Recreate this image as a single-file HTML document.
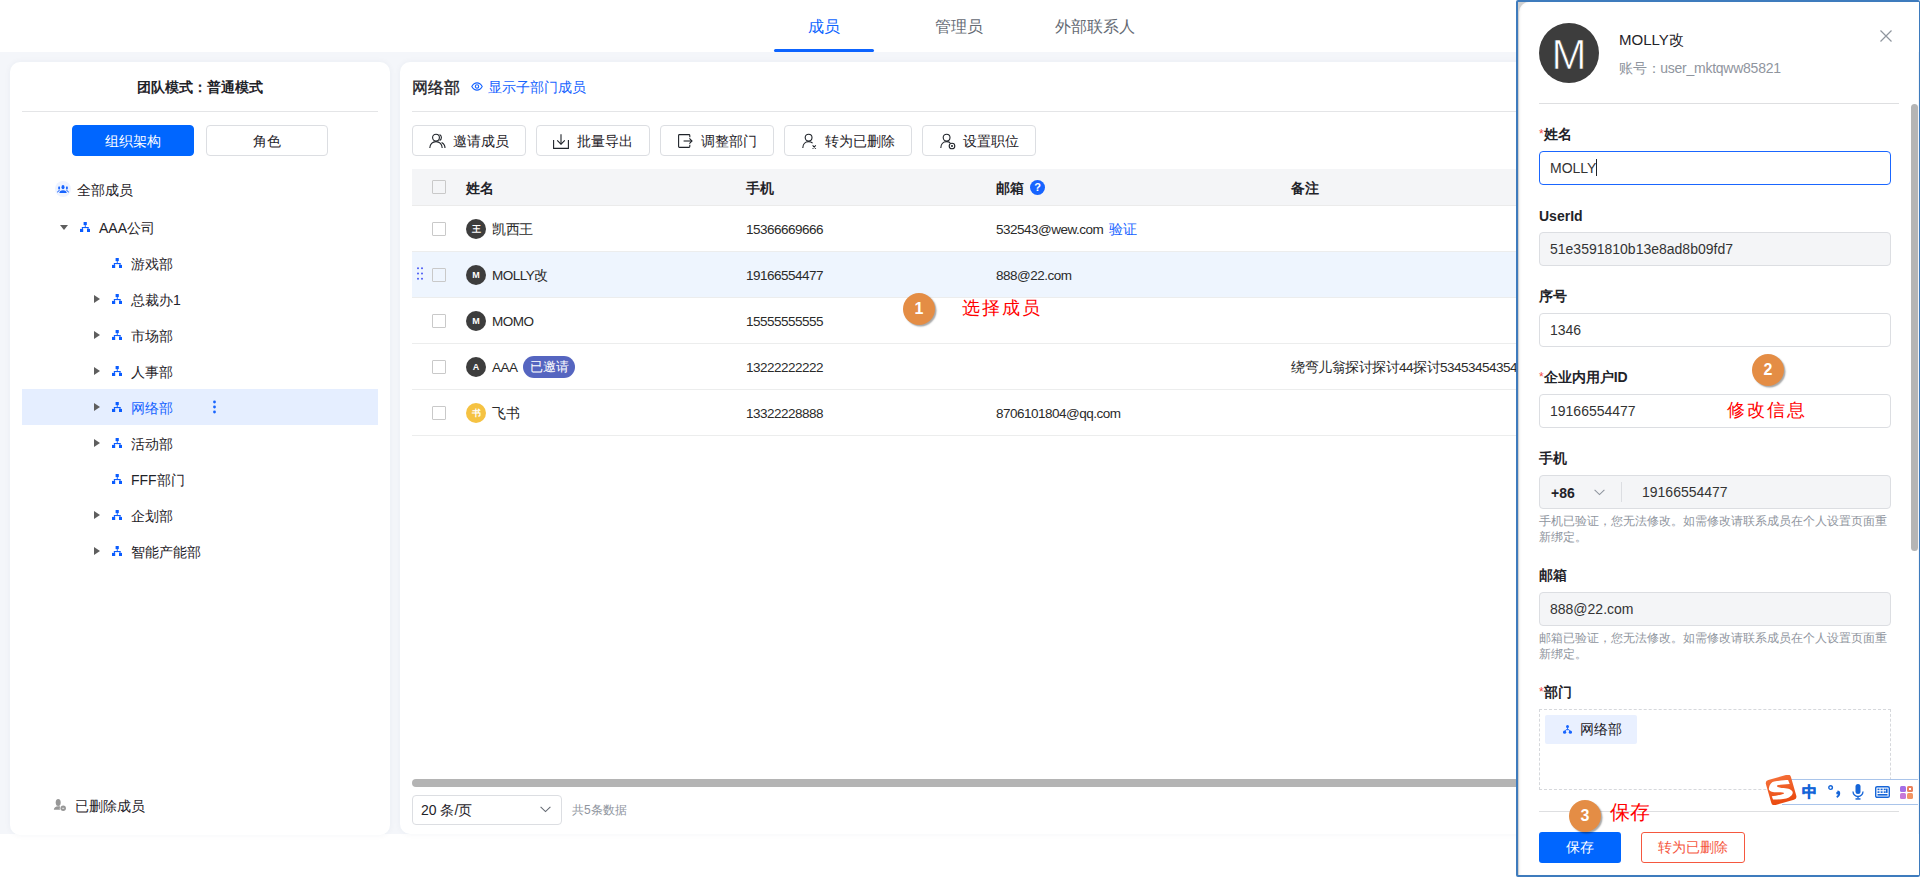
<!DOCTYPE html>
<html><head><meta charset="utf-8">
<style>
*{box-sizing:border-box;margin:0;padding:0}
html,body{width:1920px;height:880px;overflow:hidden;background:#fff;font-family:"Liberation Sans",sans-serif;font-size:14px;color:#1f2329}
.a{position:absolute;white-space:nowrap}
#bg{position:absolute;left:0;top:52px;width:1920px;height:782px;background:#f4f6fa}
.card{position:absolute;background:#fff;border-radius:10px;box-shadow:0 0 6px rgba(40,50,90,.05)}
.tab{position:absolute;top:17px;font-size:16px;line-height:20px;color:#646a73}
.btn{position:absolute;height:31px;border:1px solid #dcdee2;border-radius:4px;background:#fff;line-height:30px;text-align:center;font-size:14px;color:#1f2329}
.tree{position:absolute;height:36px;line-height:38px;font-size:14px;color:#1f2329}
.org{position:absolute;width:10px;height:10px}
.caret{position:absolute;width:0;height:0}
.cb{position:absolute;width:14px;height:14px;border:1.5px solid #c9c9c9;border-radius:1px}
.th{position:absolute;top:179px;font-size:14px;line-height:18px;font-weight:bold;color:#1f2329}
.td{position:absolute;font-size:13.5px;letter-spacing:-.5px;line-height:18px;color:#2a2a2a;white-space:nowrap}
.av{position:absolute;width:20px;height:20px;border-radius:50%;color:#fff;font-size:9px;font-weight:bold;line-height:20px;text-align:center}
.lb{position:absolute;left:1539px;font-size:14px;line-height:18px;font-weight:bold;color:#1f2329}
.req{color:#f54a45;font-weight:normal;font-size:12px;vertical-align:1px}
.inp{position:absolute;left:1539px;width:352px;height:34px;border:1px solid #dcdee2;border-radius:4px;padding-left:10px;font-size:14px;line-height:32px;color:#333}
.dis{background:#f4f5f7;color:#333}
.hint{position:absolute;left:1539px;font-size:12px;line-height:16px;color:#8f959e}
.num{position:absolute;width:32px;height:32px;border-radius:50%;background:#e48d45;color:#fff;font-weight:bold;font-size:16px;line-height:32px;text-align:center;box-shadow:1.5px 1.5px 1.5px rgba(0,0,0,.35)}
.anno{position:absolute;font-size:18px;line-height:22px;color:#f00;letter-spacing:2px;white-space:nowrap}
</style></head><body>
<svg width="0" height="0" style="position:absolute"><defs>
<symbol id="i-org" viewBox="0 0 10 10"><g fill="#0a5cff"><rect x="3.6" y="0" width="3.2" height="3.1"/><rect x="4.8" y="3" width=".9" height="2.2"/><rect x="1.9" y="5" width="6.6" height="1.1"/><rect x="1.9" y="5" width="1" height="2"/><rect x="7.5" y="5" width="1" height="2"/><rect x="0" y="6.9" width="3.2" height="3.1"/><rect x="7" y="6.9" width="3.1" height="3.1"/></g></symbol>
</defs></svg>
<!-- header tabs -->
<div class="tab" style="left:808px;color:#0d64ff">成员</div>
<div style="position:absolute;left:774px;top:49px;width:100px;height:3px;background:#0d64ff;border-radius:2px"></div>
<div class="tab" style="left:935px">管理员</div>
<div class="tab" style="left:1055px">外部联系人</div>
<div id="bg"></div>

<!-- left card -->
<div class="card" style="left:10px;top:62px;width:380px;height:773px"></div>
<div class="a" style="left:0;top:78px;width:400px;text-align:center;font-weight:bold;font-size:14px;line-height:18px">团队模式：普通模式</div>
<div class="a" style="left:22px;top:111px;width:356px;height:1px;background:#e4e5e7"></div>
<div class="btn" style="left:72px;top:125px;width:122px;background:#0066ff;border-color:#0066ff;color:#fff">组织架构</div>
<div class="btn" style="left:206px;top:125px;width:122px">角色</div>


<div class="a" style="left:55px;top:181px;width:16px;height:16px;border-radius:50%;background:#eef3ff"></div>
<svg class="a" style="left:57px;top:185px" width="12" height="8" viewBox="0 0 12 8"><g fill="#1764ff"><ellipse cx="6" cy="2.2" rx="1.5" ry="2.1"/><path d="M2.3 8Q2.5 5.2 6 5.2T9.7 8z"/><ellipse cx="2.1" cy="2.9" rx=".95" ry="1.7"/><ellipse cx="9.9" cy="2.9" rx=".95" ry="1.7"/></g><path d="M.5 7.4Q1 5.6 2.6 5.3M11.5 7.4Q11 5.6 9.4 5.3" fill="none" stroke="#1764ff" stroke-width="1"/></svg>
<div class="tree" style="left:77px;top:171px">全部成员</div>
<div class="caret" style="left:60px;top:225px;border-left:4.6px solid transparent;border-right:4.6px solid transparent;border-top:5px solid #5e5e5e"></div>
<svg class="org" style="left:80px;top:222px" viewBox="0 0 10 10"><use href="#i-org"/></svg>
<div class="tree" style="left:99px;top:209px">AAA公司</div>
<svg class="org" style="left:112px;top:258px" viewBox="0 0 10 10"><use href="#i-org"/></svg>
<div class="tree" style="left:131px;top:245px">游戏部</div>
<div class="caret" style="left:94px;top:295px;border-top:4.8px solid transparent;border-bottom:4.8px solid transparent;border-left:6px solid #5e5e5e"></div>
<svg class="org" style="left:112px;top:294px" viewBox="0 0 10 10"><use href="#i-org"/></svg>
<div class="tree" style="left:131px;top:281px">总裁办1</div>
<div class="caret" style="left:94px;top:331px;border-top:4.8px solid transparent;border-bottom:4.8px solid transparent;border-left:6px solid #5e5e5e"></div>
<svg class="org" style="left:112px;top:330px" viewBox="0 0 10 10"><use href="#i-org"/></svg>
<div class="tree" style="left:131px;top:317px">市场部</div>
<div class="caret" style="left:94px;top:367px;border-top:4.8px solid transparent;border-bottom:4.8px solid transparent;border-left:6px solid #5e5e5e"></div>
<svg class="org" style="left:112px;top:366px" viewBox="0 0 10 10"><use href="#i-org"/></svg>
<div class="tree" style="left:131px;top:353px">人事部</div>
<div class="a" style="left:22px;top:389px;width:356px;height:36px;background:#e5eeff"></div>
<div class="caret" style="left:94px;top:403px;border-top:4.8px solid transparent;border-bottom:4.8px solid transparent;border-left:6px solid #5e5e5e"></div>
<svg class="org" style="left:112px;top:402px" viewBox="0 0 10 10"><use href="#i-org"/></svg>
<div class="tree" style="left:131px;top:389px;color:#1764ff">网络部</div>
<svg class="a" style="left:212px;top:400px" width="5" height="14" viewBox="0 0 5 14"><circle cx="2.5" cy="2" r="1.4" fill="#1764ff"/><circle cx="2.5" cy="7" r="1.4" fill="#1764ff"/><circle cx="2.5" cy="12" r="1.4" fill="#1764ff"/></svg>
<div class="caret" style="left:94px;top:439px;border-top:4.8px solid transparent;border-bottom:4.8px solid transparent;border-left:6px solid #5e5e5e"></div>
<svg class="org" style="left:112px;top:438px" viewBox="0 0 10 10"><use href="#i-org"/></svg>
<div class="tree" style="left:131px;top:425px">活动部</div>
<svg class="org" style="left:112px;top:474px" viewBox="0 0 10 10"><use href="#i-org"/></svg>
<div class="tree" style="left:131px;top:461px">FFF部门</div>
<div class="caret" style="left:94px;top:511px;border-top:4.8px solid transparent;border-bottom:4.8px solid transparent;border-left:6px solid #5e5e5e"></div>
<svg class="org" style="left:112px;top:510px" viewBox="0 0 10 10"><use href="#i-org"/></svg>
<div class="tree" style="left:131px;top:497px">企划部</div>
<div class="caret" style="left:94px;top:547px;border-top:4.8px solid transparent;border-bottom:4.8px solid transparent;border-left:6px solid #5e5e5e"></div>
<svg class="org" style="left:112px;top:546px" viewBox="0 0 10 10"><use href="#i-org"/></svg>
<div class="tree" style="left:131px;top:533px">智能产能部</div>
<svg class="a" style="left:53px;top:798px" width="14" height="14" viewBox="0 0 14 14"><g fill="#979797"><ellipse cx="5.2" cy="4.6" rx="2.5" ry="3.5"/><path d="M.8 11.8C1 9.4 2.6 8.2 5.2 8.2 6.8 8.2 7.8 8.7 8.6 9.4V11.8z"/></g><circle cx="10.2" cy="10.2" r="3.4" fill="#fff"/><circle cx="10.2" cy="10.2" r="2.7" fill="#979797"/><rect x="9.2" y="9.85" width="2" height=".75" fill="#fff"/></svg>
<div class="tree" style="left:75px;top:787px">已删除成员</div>

<!-- right card -->
<div class="card" style="left:400px;top:62px;width:1200px;height:772px"></div>
<div class="a" style="left:412px;top:78px;font-size:16px;line-height:20px;color:#1f2329;-webkit-text-stroke:.35px #1f2329">网络部</div>
<svg class="a" style="left:471px;top:82px" width="12" height="9" viewBox="0 0 12 9"><path d="M.8 4.5C2.2 2 4 .9 6 .9s3.8 1.1 5.2 3.6C9.8 7 8 8.1 6 8.1S2.2 7 .8 4.5z" fill="none" stroke="#1764ff" stroke-width="1.1"/><circle cx="6" cy="4.5" r="1.7" fill="none" stroke="#1764ff" stroke-width="1.1"/></svg>
<div class="a" style="left:488px;top:78px;font-size:14px;line-height:18px;color:#1764ff">显示子部门成员</div>
<div class="a" style="left:412px;top:111px;width:1110px;height:1px;background:#e4e5e7"></div>

<div class="btn" style="left:412px;top:125px;width:114px"></div>
<svg class="a" style="left:429px;top:133px" width="17" height="16" viewBox="0 0 17 16"><g fill="none" stroke="#1f2329" stroke-width="1.1"><circle cx="7" cy="4.6" r="3.4"/><path d="M.8 15c0-3.8 2.7-6.4 6.2-6.4s6.2 2.6 6.2 6.4"/><path d="M10.6 1.6a3.4 3.4 0 0 1 0 6"/><path d="M12.6 9.4c2 1 3.4 3 3.4 5.6"/></g></svg>
<div class="a" style="left:453px;top:132px;line-height:18px">邀请成员</div>

<div class="btn" style="left:536px;top:125px;width:114px"></div>
<svg class="a" style="left:553px;top:134px" width="16" height="15" viewBox="0 0 16 15"><g fill="none" stroke="#1f2329" stroke-width="1.1"><path d="M.6 6v8.4h14.8V6"/><path d="M8 .2v10"/><path d="M4.2 6.4 8 10.2l3.8-3.8"/></g></svg>
<div class="a" style="left:577px;top:132px;line-height:18px">批量导出</div>

<div class="btn" style="left:660px;top:125px;width:114px"></div>
<svg class="a" style="left:678px;top:134px" width="15" height="14" viewBox="0 0 15 14"><g fill="none" stroke="#1f2329" stroke-width="1.1"><path d="M11.8 3.2V1.4q0-.8-.8-.8H1.4q-.8 0-.8.8v11.2q0 .8.8.8H11q.8 0 .8-.8v-1.8"/><path d="M5.6 7h8.4"/><path d="M11.4 4.4 14 7l-2.6 2.6"/></g></svg>
<div class="a" style="left:701px;top:132px;line-height:18px">调整部门</div>

<div class="btn" style="left:784px;top:125px;width:128px"></div>
<svg class="a" style="left:802px;top:133px" width="15" height="16" viewBox="0 0 15 16"><g fill="none" stroke="#1f2329" stroke-width="1.1"><circle cx="6.6" cy="4.6" r="3.4"/><path d="M.8 15c0-3.8 2.5-6.4 5.8-6.4 1.6 0 3 .6 4 1.6"/><path d="M10.6 12.4l3.2 3.2M13.8 12.4l-3.2 3.2"/></g></svg>
<div class="a" style="left:825px;top:132px;line-height:18px">转为已删除</div>

<div class="btn" style="left:922px;top:125px;width:114px"></div>
<svg class="a" style="left:940px;top:133px" width="16" height="17" viewBox="0 0 16 17"><g fill="none" stroke="#1f2329" stroke-width="1.1"><circle cx="6.6" cy="4.6" r="3.4"/><path d="M.8 15c0-3.8 2.5-6.4 5.8-6.4 1.4 0 2.6.4 3.6 1.2"/><circle cx="12" cy="13" r="2.8"/></g><circle cx="12" cy="13" r="1" fill="#1f2329"/></svg>
<div class="a" style="left:963px;top:132px;line-height:18px">设置职位</div>

<!-- table -->
<div class="a" style="left:412px;top:169px;width:1110px;height:37px;background:#f4f5f7;border-bottom:1px solid #ebebeb"></div>
<div class="cb" style="left:432px;top:180px"></div>
<div class="th" style="left:466px">姓名</div>
<div class="th" style="left:746px">手机</div>
<div class="th" style="left:996px">邮箱</div>
<div class="a" style="left:1030px;top:180px;width:15px;height:15px;border-radius:50%;background:#1764ff;color:#fff;font-size:11px;line-height:15px;text-align:center;font-weight:bold">?</div>
<div class="th" style="left:1291px">备注</div>
<div class="a" style="left:412px;top:206px;width:1110px;height:46px;background:#fff;border-bottom:1px solid #eceded"></div>
<div class="cb" style="left:432px;top:222px"></div>
<div class="av" style="left:466px;top:219px;background:#3d3d3d">王</div>
<div class="td" style="left:492px;top:221px">凯西王</div>
<div class="td" style="left:746px;top:221px">15366669666</div>
<div class="td" style="left:996px;top:221px">532543@wew.com</div>
<div class="td" style="left:1109px;top:221px;color:#1764ff">验证</div>
<div class="a" style="left:412px;top:252px;width:1110px;height:46px;background:#eef5fe;border-bottom:1px solid #eceded"></div>
<svg class="a" style="left:417px;top:267px" width="6" height="13" viewBox="0 0 6 13"><g fill="#4a5cf5"><circle cx="1" cy="1.2" r="1"/><circle cx="5" cy="1.2" r="1"/><circle cx="1" cy="6.5" r="1"/><circle cx="5" cy="6.5" r="1"/><circle cx="1" cy="11.8" r="1"/><circle cx="5" cy="11.8" r="1"/></g></svg>
<div class="cb" style="left:432px;top:268px"></div>
<div class="av" style="left:466px;top:265px;background:#3d3d3d">M</div>
<div class="td" style="left:492px;top:267px">MOLLY改</div>
<div class="td" style="left:746px;top:267px">19166554477</div>
<div class="td" style="left:996px;top:267px">888@22.com</div>
<div class="a" style="left:412px;top:298px;width:1110px;height:46px;background:#fff;border-bottom:1px solid #eceded"></div>
<div class="cb" style="left:432px;top:314px"></div>
<div class="av" style="left:466px;top:311px;background:#3d3d3d">M</div>
<div class="td" style="left:492px;top:313px">MOMO</div>
<div class="td" style="left:746px;top:313px">15555555555</div>
<div class="a" style="left:412px;top:344px;width:1110px;height:46px;background:#fff;border-bottom:1px solid #eceded"></div>
<div class="cb" style="left:432px;top:360px"></div>
<div class="av" style="left:466px;top:357px;background:#3d3d3d">A</div>
<div class="td" style="left:492px;top:359px">AAA</div>
<div class="a" style="left:523px;top:356px;width:52px;height:22px;border-radius:11px;background:#5565c0;color:#fff;font-size:12.5px;line-height:22px;text-align:center">已邀请</div>
<div class="td" style="left:746px;top:359px">13222222222</div>
<div class="td" style="left:1291px;top:359px">绕弯儿翁探讨探讨44探讨534534543543</div>
<div class="a" style="left:412px;top:390px;width:1110px;height:46px;background:#fff;border-bottom:1px solid #eceded"></div>
<div class="cb" style="left:432px;top:406px"></div>
<div class="av" style="left:466px;top:403px;background:#f5c242">书</div>
<div class="td" style="left:492px;top:405px">飞书</div>
<div class="td" style="left:746px;top:405px">13322228888</div>
<div class="td" style="left:996px;top:405px">8706101804@qq.com</div>

<div class="a" style="left:412px;top:779px;width:1110px;height:8px;border-radius:4px;background:#b4b4b4"></div>
<div class="a" style="left:412px;top:795px;width:150px;height:30px;border:1px solid #dcdee2;border-radius:4px;background:#fff"></div>
<div class="a" style="left:421px;top:801px;font-size:14px;line-height:18px;color:#1f2329">20 条/页</div>
<svg class="a" style="left:540px;top:806px" width="11" height="7" viewBox="0 0 11 7"><path d="M.6.8 5.5 5.6 10.4.8" fill="none" stroke="#646a73" stroke-width="1.1"/></svg>
<div class="a" style="left:572px;top:802px;font-size:12px;line-height:16px;color:#8f959e">共5条数据</div>

<!-- side panel -->
<div class="a" style="left:1518px;top:2px;width:400px;height:873px;background:#d0d0d0"></div>
<div class="a" style="left:1519px;top:2px;width:399px;height:873px;background:#fff;border-top-left-radius:10px;box-shadow:inset 2px 0 3px -2px rgba(0,0,0,.12)"></div>
<div class="a" style="left:1516px;top:0;width:404px;height:877px;border:2px solid #3e7bbd;border-right-width:1.5px;border-radius:2px"></div>

<div class="a" style="left:1539px;top:23px;width:60px;height:60px;border-radius:50%;background:#3d3d3d;color:#fff;font-size:42px;line-height:64px;text-align:center;-webkit-text-stroke:.7px #3d3d3d">M</div>
<div class="a" style="left:1619px;top:31px;font-size:15px;line-height:18px;color:#1f2329">MOLLY改</div>
<div class="a" style="left:1619px;top:59px;font-size:14px;line-height:18px;color:#8f959e;letter-spacing:-.25px">账号：user_mktqww85821</div>
<svg class="a" style="left:1880px;top:30px" width="12" height="12" viewBox="0 0 12 12"><path d="M.5.5l11 11M11.5.5l-11 11" stroke="#8f959e" stroke-width="1.2"/></svg>
<div class="a" style="left:1539px;top:103px;width:360px;height:1px;background:#dedfe1"></div>

<div class="lb" style="top:125px"><span class="req">*</span>姓名</div>
<div class="inp" style="top:151px;border:1.5px solid #1a66ff;background:#fff">MOLLY<span style="display:inline-block;width:1px;height:17px;background:#1f2329;vertical-align:-3px"></span></div>
<div class="lb" style="top:207px">UserId</div>
<div class="inp dis" style="top:232px">51e3591810b13e8ad8b09fd7</div>
<div class="lb" style="top:287px">序号</div>
<div class="inp" style="top:313px">1346</div>
<div class="lb" style="top:368px"><span class="req">*</span>企业内用户ID</div>
<div class="inp" style="top:394px">19166554477</div>
<div class="lb" style="top:449px">手机</div>
<div class="inp dis" style="top:475px"></div>
<div class="a" style="left:1551px;top:484px;font-size:14px;line-height:18px;font-weight:bold;color:#1f2329">+86</div>
<svg class="a" style="left:1594px;top:489px" width="11" height="7" viewBox="0 0 11 7"><path d="M.6.8 5.5 5.6 10.4.8" fill="none" stroke="#8f959e" stroke-width="1.1"/></svg>
<div class="a" style="left:1621px;top:482px;width:1px;height:20px;background:#dcdee2"></div>
<div class="a" style="left:1642px;top:483px;font-size:14px;line-height:18px;color:#333">19166554477</div>
<div class="hint" style="top:513px">手机已验证，您无法修改。如需修改请联系成员在个人设置页面重<br>新绑定。</div>
<div class="lb" style="top:566px">邮箱</div>
<div class="inp dis" style="top:592px">888@22.com</div>
<div class="hint" style="top:630px">邮箱已验证，您无法修改。如需修改请联系成员在个人设置页面重<br>新绑定。</div>
<div class="lb" style="top:683px"><span class="req">*</span>部门</div>
<div class="a" style="left:1539px;top:709px;width:352px;height:81px;border:1px dashed #d6d8dc"></div>
<div class="a" style="left:1545px;top:715px;width:92px;height:29px;background:#e9f0ff;border-radius:2px"></div>
<svg class="a" style="left:1563px;top:725px" width="9" height="9" viewBox="0 0 9 9"><g fill="#1764ff"><circle cx="4.5" cy="1.6" r="1.5"/><circle cx="1.6" cy="7.2" r="1.6"/><circle cx="7.4" cy="7.2" r="1.6"/></g><path d="M4.5 2.5v2.3M2 6l1-1.3h3L7 6" fill="none" stroke="#1764ff" stroke-width=".9"/></svg>
<div class="a" style="left:1580px;top:720px;font-size:14px;line-height:18px;color:#1f2329">网络部</div>
<div class="a" style="left:1539px;top:811px;width:360px;height:1px;background:#dedfe1"></div>
<div class="a" style="left:1539px;top:832px;width:82px;height:31px;background:#0066ff;border-radius:3px;color:#fff;font-size:14px;line-height:31px;text-align:center">保存</div>
<div class="a" style="left:1641px;top:832px;width:104px;height:31px;border:1px solid #f5583f;border-radius:3px;color:#f5583f;font-size:14px;line-height:29px;text-align:center">转为已删除</div>
<div class="a" style="left:1911px;top:104px;width:7px;height:447px;border-radius:3.5px;background:#b5b5b5"></div>

<!-- annotations -->
<div class="num" style="left:903px;top:293px">1</div>
<div class="anno" style="left:962px;top:297px">选择成员</div>
<div class="num" style="left:1752px;top:354px">2</div>
<div class="anno" style="left:1727px;top:399px">修改信息</div>
<div class="num" style="left:1569px;top:800px">3</div>
<div class="anno" style="left:1610px;top:801px;font-size:20px;letter-spacing:0">保存</div>

<!-- IME bar -->
<div class="a" style="left:1782px;top:779px;width:136px;height:26px;background:#fff;border-top:1px solid #a9c4ea;border-bottom:1px solid #a9c4ea"></div>
<svg class="a" style="left:1765px;top:775px" width="32" height="30" viewBox="0 0 32 30"><defs><linearGradient id="sg" x1="0" y1="0" x2="0" y2="1"><stop offset="0" stop-color="#f46d36"/><stop offset="1" stop-color="#ea4a10"/></linearGradient></defs><rect x="3.1" y="1.9" width="26" height="26" rx="3.4" fill="url(#sg)" transform="rotate(-16 16.1 14.9)"/><path d="M23.1 5.1L24.7 9C20 9.2 14 9.6 12.1 10.6 11.5 11.5 13 12.6 16.6 12.9 22 13 26 13.6 27.6 16.8 28.5 20 24 23 19.8 23.7 15 24.5 10 24.6 8 24.5L6.8 21.3C11 21 17 19.6 19 18.4 19.8 17.5 16 17.2 9.2 17.2 5 17 3.5 15 3.9 13.5 4.5 9 7 6.8 9.2 6.5 14 5.6 20 5.2 23.1 5.1Z" fill="#fff"/></svg>
<div class="a" style="left:1802px;top:782px;font-size:15px;line-height:20px;font-weight:bold;color:#1565d8;-webkit-text-stroke:.5px #1565d8">中</div>
<svg class="a" style="left:1828px;top:785px" width="13" height="13" viewBox="0 0 13 13"><circle cx="2.6" cy="2.6" r="1.8" fill="none" stroke="#1565d8" stroke-width="1.4"/><path d="M9.5 6.5c1.4 0 1.8 1 1.8 1.8 0 1.8-1.4 3.2-2.6 3.8" fill="none" stroke="#1565d8" stroke-width="1.8"/><circle cx="9.7" cy="8" r="1.5" fill="#1565d8"/></svg>
<svg class="a" style="left:1852px;top:784px" width="12" height="16" viewBox="0 0 12 16"><rect x="3.5" y="0" width="5" height="10" rx="2.5" fill="#1565d8"/><path d="M1 7.5a5 5 0 0 0 10 0" fill="none" stroke="#1565d8" stroke-width="1.3"/><path d="M6 12.5v2" stroke="#1565d8" stroke-width="1.3"/><rect x="3.5" y="14.2" width="5" height="1.5" fill="#1565d8"/></svg>
<svg class="a" style="left:1875px;top:786px" width="15" height="12" viewBox="0 0 15 12"><rect x=".7" y=".7" width="13.6" height="10.6" rx="1.4" fill="none" stroke="#1565d8" stroke-width="1.4"/><g fill="#1565d8"><rect x="2.5" y="2.6" width="2" height="1.6"/><rect x="5.6" y="2.6" width="2" height="1.6"/><rect x="8.7" y="2.6" width="2" height="1.6"/><rect x="2.5" y="5.3" width="2" height="1.6"/><rect x="5.6" y="5.3" width="2" height="1.6"/><rect x="8.7" y="5.3" width="2" height="1.6"/><rect x="11" y="2.6" width="1.6" height="4.3"/><rect x="2.5" y="8" width="10" height="1.6"/></g></svg>
<svg class="a" style="left:1900px;top:786px" width="13" height="13" viewBox="0 0 13 13"><rect x="0" y="0" width="6" height="6" rx="1.5" fill="#a46ee6"/><rect x="7" y="0" width="6" height="6" rx="1.5" fill="#e9805d"/><rect x="9" y="2" width="2" height="2" fill="#fff"/><rect x="0" y="7" width="6" height="6" rx="1.5" fill="#c779d8"/><rect x="7" y="7" width="6" height="6" rx="1.5" fill="#f39563"/></svg>

</body></html>
